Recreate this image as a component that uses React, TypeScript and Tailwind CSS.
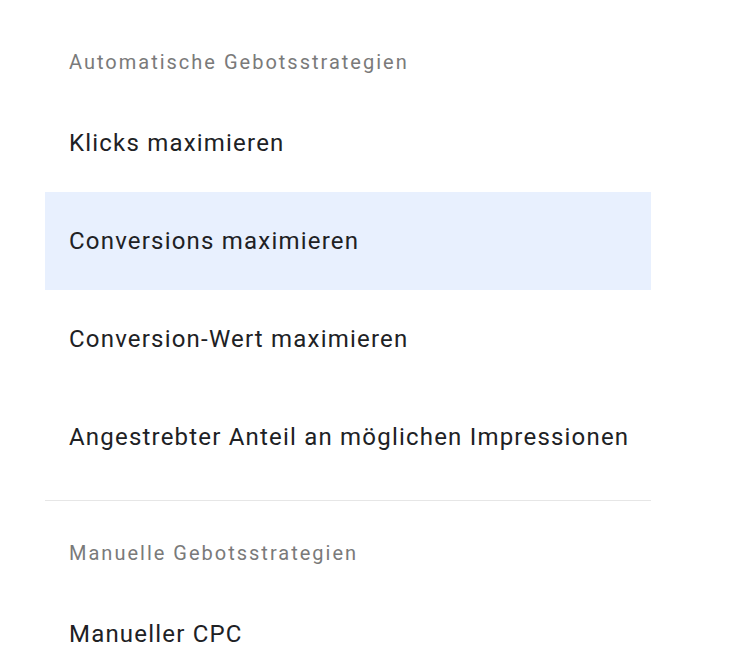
const groups = [
  {
    title: 'Automatische Gebotsstrategien',
    items: [
      'Klicks maximieren',
      'Conversions maximieren',
      'Conversion-Wert maximieren',
      'Angestrebter Anteil an möglichen Impressionen',
    ],
  },
  {
    title: 'Manuelle Gebotsstrategien',
    items: ['Manueller CPC'],
  },
];

const selected = 'Conversions maximieren';

export default function App() {
  return (
    <div className="min-h-screen bg-white pt-[10px] font-['Roboto',sans-serif]">
      <div className="ml-[45px] w-[606px]">
        {groups.map((group, gi) => (
          <div key={group.title} className={gi > 0 ? 'border-t border-[#e6e6e6]' : 'pb-[14px]'}>
            <div className="whitespace-nowrap px-6 pt-[40px] pb-[20px] text-[20px] leading-6 tracking-[2px] text-[#7a7a7a]">
              {group.title}
            </div>
            {group.items.map((item) => (
              <div
                key={item}
                className={`flex h-[98px] items-center whitespace-nowrap px-6 text-[24px] tracking-[1.2px] text-[#202124] ${
                  item === selected ? 'bg-[#e8f0fe]' : ''
                }`}
              >
                {item}
              </div>
            ))}
          </div>
        ))}
      </div>
    </div>
  );
}
